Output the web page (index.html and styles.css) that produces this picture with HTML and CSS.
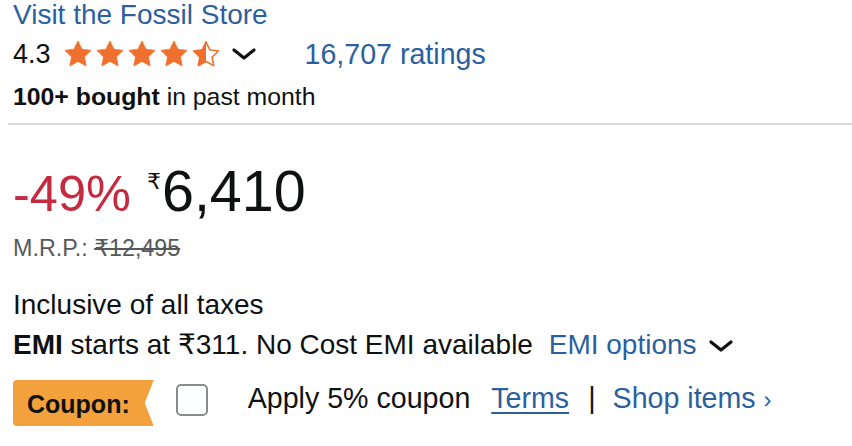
FILE: index.html
```html
<!DOCTYPE html>
<html lang="en">
<head>
<meta charset="utf-8">
<title>Fossil</title>
<link rel="stylesheet" href="styles.css">
</head>
<body>
<div class="page">
  <a class="store link" href="#">Visit the Fossil Store</a>
  <div class="rating-row">
    <span class="rating-num">4.3</span>
    <span class="stars">
      <svg class="star" viewBox="0 0 24 24"><polygon class="full" points="12,1.5 15.2,8.1 22.5,9.1 17.2,14.2 18.5,21.5 12,18 5.5,21.5 6.8,14.2 1.5,9.1 8.8,8.1"/></svg>
      <svg class="star" viewBox="0 0 24 24"><polygon class="full" points="12,1.5 15.2,8.1 22.5,9.1 17.2,14.2 18.5,21.5 12,18 5.5,21.5 6.8,14.2 1.5,9.1 8.8,8.1"/></svg>
      <svg class="star" viewBox="0 0 24 24"><polygon class="full" points="12,1.5 15.2,8.1 22.5,9.1 17.2,14.2 18.5,21.5 12,18 5.5,21.5 6.8,14.2 1.5,9.1 8.8,8.1"/></svg>
      <svg class="star" viewBox="0 0 24 24"><polygon class="full" points="12,1.5 15.2,8.1 22.5,9.1 17.2,14.2 18.5,21.5 12,18 5.5,21.5 6.8,14.2 1.5,9.1 8.8,8.1"/></svg>
      <svg class="star" viewBox="0 0 24 24"><defs><linearGradient id="half" x1="0" x2="1" y1="0" y2="0"><stop offset="0.5" stop-color="#ef702c"/><stop offset="0.5" stop-color="#ffffff"/></linearGradient></defs><polygon class="half" fill="url(#half)" points="12,2.3 15,8.6 22,9.6 16.9,14.4 18.1,21.3 12,18 5.9,21.3 7.1,14.4 2,9.6 9,8.6"/></svg>
    </span>
    <svg class="chev" viewBox="0 0 24 12"><polyline points="2,2 12,10 22,2"/></svg>
    <a class="ratings link" href="#">16,707 ratings</a>
  </div>
  <div class="bought"><b>100+ bought</b> in past month</div>
  <hr class="divider">
  <div class="price-row">
    <span class="discount">-49%</span>
    <span class="symbol">₹</span>
    <span class="whole">6,410</span>
  </div>
  <div class="mrp">M.R.P.: <s>₹12,495</s></div>
  <div class="taxes">Inclusive of all taxes</div>
  <div class="emi"><b>EMI</b> starts at ₹311. No Cost EMI available <a class="link emi-link" href="#">EMI options</a><svg class="chev chev-emi" viewBox="0 0 24 12"><polyline points="2,2 12,10 22,2"/></svg></div>
  <div class="coupon-row">
    <span class="badge">Coupon:</span>
    <span class="checkbox"></span>
    <span class="apply">Apply 5% coupon</span>
    <a class="link terms" href="#">Terms</a>
    <span class="sep">|</span>
    <a class="link shop" href="#">Shop items <span class="gt">›</span></a>
  </div>
</div>
</body>
</html>
```

FILE: styles.css
```css
html, body {
  margin: 0;
  padding: 0;
  background: #ffffff;
}
body {
  font-family: "Liberation Sans", Arial, "DejaVu Sans", sans-serif;
  color: #0f1111;
  font-size: 28px;
  width: 852px;
  overflow: hidden;
}
.page {
  padding-left: 13px;
}
.link {
  color: #2c5f9e;
  text-decoration: none;
}
.store {
  display: block;
  line-height: 30px;
  font-size: 28px;
}
.rating-row {
  display: flex;
  align-items: center;
  margin-top: 6px;
  height: 36px;
  line-height: 36px;
}
.rating-num {
  font-size: 27px;
}
.stars {
  display: flex;
  gap: 2px;
  margin-left: 12px;
}
.star {
  width: 30px;
  height: 30px;
  display: block;
}
.star .full {
  fill: #ef702c;
  stroke: #ef702c;
  stroke-width: 0.6;
  stroke-linejoin: round;
}
.star .half {
  stroke: #ef702c;
  stroke-width: 1.3;
  stroke-linejoin: round;
}
.chev {
  width: 24px;
  height: 12px;
  display: block;
  margin-left: 11px;
  fill: none;
  stroke: #0f1111;
  stroke-width: 3.2;
  stroke-linecap: round;
  stroke-linejoin: round;
}
.ratings {
  margin-left: 49px;
  font-size: 28.6px;
}
.bought {
  margin-top: 10px;
  font-size: 24.8px;
  line-height: 30px;
}
.divider {
  border: 0;
  height: 2px;
  background: #d5d9d9;
  margin: 11px 0 0 -5px;
}
.price-row {
  display: flex;
  align-items: baseline;
  margin-top: 34px;
  height: 64px;
  line-height: 64px;
}
.discount {
  color: #c62a3f;
  font-size: 50.5px;
}
.symbol {
  align-self: flex-start;
  font-size: 22px;
  line-height: 22px;
  margin-top: 12px;
  margin-left: 16px;
}
.whole {
  font-size: 57.5px;
  margin-left: 1px;
}
.mrp {
  margin-top: 10px;
  font-size: 23.3px;
  line-height: 30px;
  color: #565959;
}
.taxes {
  margin-top: 24px;
  line-height: 36px;
}
.emi {
  margin-top: 4px;
  line-height: 36px;
  display: flex;
  align-items: center;
  white-space: pre;
}
.emi-link {
  margin-left: 8px;
}
.chev-emi {
  margin-left: 12px;
  margin-top: 2px;
}
.coupon-row {
  display: flex;
  align-items: flex-start;
  margin-top: 17px;
  line-height: 36px;
  font-size: 28.6px;
}
.badge {
  display: block;
  background: #f3a13c;
  font-weight: bold;
  font-size: 25px;
  line-height: 44px;
  height: 44px;
  padding: 2px 24px 0 14px;
  border-radius: 4px 0 0 4px;
  clip-path: polygon(0 0, 100% 0, calc(100% - 9px) 50%, 100% 100%, 0 100%);
}
.checkbox {
  display: block;
  box-sizing: border-box;
  width: 32px;
  height: 32px;
  margin-top: 4px;
  margin-left: 22px;
  border: 2px solid #888c8c;
  border-radius: 5px;
  background: #ffffff;
}
.apply {
  margin-left: 40px;
}
.terms {
  margin-left: 21px;
  text-decoration: underline;
  text-underline-offset: 4px;
  text-decoration-thickness: 2px;
}
.sep {
  margin-left: 19px;
}
.shop {
  margin-left: 17px;
}
.gt {
  font-size: 24px;
}
```
